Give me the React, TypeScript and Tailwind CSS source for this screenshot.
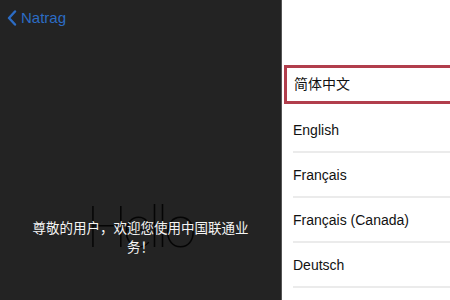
export default function App() {
  const langs = ['English', 'Français', 'Français (Canada)', 'Deutsch'];

  return (
    <div className="flex h-[300px] w-[450px] overflow-hidden font-['Liberation_Sans','Noto_Sans_CJK_SC',sans-serif]">
      {/* left: welcome screen */}
      <div className="flex w-[281px] shrink-0 flex-col bg-[#232323]">
        <div className="flex h-[36px] items-center pl-[7px] text-[#2c6cc4]">
          <svg width="10" height="16" viewBox="0 0 10 16" fill="none">
            <path d="M8 1.5 L2 8 L8 14.5" stroke="currentColor" strokeWidth="2.4" strokeLinecap="round" strokeLinejoin="round" />
          </svg>
          <span className="ml-[4px] text-[15px]">Natrag</span>
        </div>
        <div className="relative flex flex-1 flex-col items-center pt-[183px]">
          <div className="absolute left-[-2px] right-0 top-[162px] text-center font-['Roboto',sans-serif] text-[58px] font-thin leading-none tracking-[-4px] text-[#050505]">
            Hello
          </div>
          <p className="relative w-[222px] text-center text-[13.5px] leading-[19px] text-[#f4f4f4]">
            尊敬的用户，欢迎您使用中国联通业务！
          </p>
        </div>
      </div>

      {/* right: language list */}
      <div className="flex flex-1 flex-col border-l border-[#555] bg-white text-[14px] text-[#111]">
        <div className="relative h-[65px] overflow-hidden">
          <span className="absolute left-[12px] top-[-19px] text-[#222]">Language</span>
        </div>
        <div className="-mr-[10px] ml-[2px] flex h-[39px] items-center border-[3px] border-[#b13e4c] pl-[7px]">
          简体中文
        </div>
        <div className="ml-[11px] mt-[4px] flex flex-col">
          {langs.map((l) => (
            <div key={l} className="flex h-[45px] items-center border-b-2 border-[#ebebeb] pt-[2px]">
              {l}
            </div>
          ))}
        </div>
      </div>
    </div>
  );
}
